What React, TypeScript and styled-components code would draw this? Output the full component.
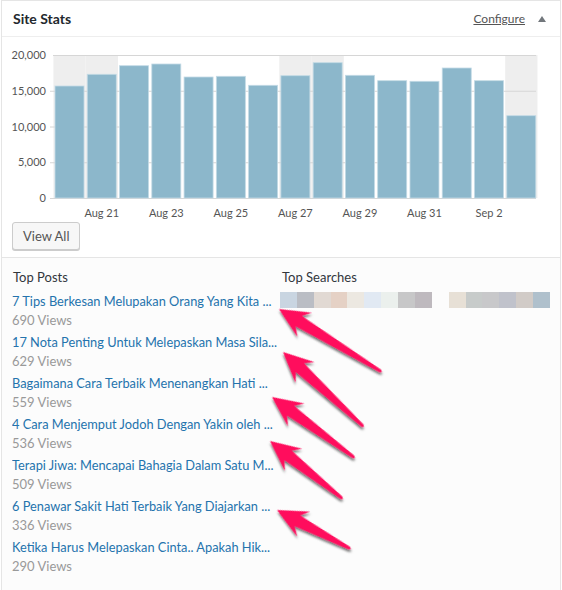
import React from "react";
import styled, { createGlobalStyle } from "styled-components";

const GlobalStyle = createGlobalStyle`
  html, body { margin: 0; padding: 0; background: #ffffff; }
  body { font-family: Lato, "Noto Sans", Arial, sans-serif; }
  * { box-sizing: border-box; }
`;

const Panel = styled.section`
  position: relative;
  width: 560px;
  margin-left: 1px;
  border: 1px solid #e5e5e5;
  border-bottom: none;
  background: #fff;
`;

const Header = styled.header`
  height: 36px;
  display: flex;
  align-items: center;
  padding: 0 12px 0 11px;
  border-bottom: 1px solid #eeeeee;
`;

const Title = styled.h2`
  flex: 1;
  margin: 0;
  font-size: 14px;
  font-weight: 700;
  color: #23282d;
`;

const ConfigureLink = styled.a`
  font-size: 12px;
  color: #555;
  text-decoration: underline;
  margin-right: 13px;
`;

const Toggle = styled.span`
  width: 0;
  height: 0;
  border-left: 4px solid transparent;
  border-right: 4px solid transparent;
  border-bottom: 6px solid #72777c;
  margin-right: 2px;
`;

const ChartWrap = styled.div`
  height: 185px;
  svg { display: block; }
`;

const ButtonRow = styled.div`
  padding: 0 0 7px 10px;
`;

const Button = styled.button`
  height: 28px;
  padding: 0 10px;
  border: 1px solid #cccccc;
  border-radius: 3px;
  background: #f7f7f7;
  box-shadow: 0 1px 0 #cccccc;
  font-family: Lato, "Noto Sans", Arial, sans-serif;
  font-size: 13px;
  color: #555;
`;

const Lists = styled.div`
  display: grid;
  grid-template-columns: 268px 1fr;
  padding: 10px 10px 20px 10px;
  border-top: 1px solid #e5e5e5;
  background: #fcfcfc;
`;

const Column = styled.div`
  min-width: 0;
`;

const Heading = styled.h3<{ $indent?: number }>`
  margin: 0 0 5px ${(p) => p.$indent ?? 0}px;
  font-size: 13px;
  font-weight: 400;
  line-height: 19px;
  color: #32373c;
`;

const PostItem = styled.div`
  height: 41px;
`;

const PostLink = styled.a`
  display: block;
  width: 270px;
  font-size: 12.8px;
  line-height: 19px;
  color: #2473ad;
  text-decoration: none;
  white-space: nowrap;
  overflow: hidden;
  text-overflow: ellipsis;
`;

const Views = styled.div`
  font-size: 13px;
  line-height: 19px;
  color: #999;
`;

const Swatches = styled.div`
  display: flex;
  margin-top: 1px;
`;

const Swatch = styled.span<{ $c: string; $gap?: boolean }>`
  width: 17px;
  height: 16px;
  background: ${(p) => p.$c};
  margin-left: ${(p) => (p.$gap ? 17 : 0)}px;
`;

const Overlay = styled.svg`
  position: absolute;
  left: 0;
  top: 0;
  pointer-events: none;
`;

const views = [
  15664, 17300, 18503, 18741, 16923, 17021, 15762, 17105, 18923, 17161, 16406,
  16322, 18182, 16406, 11510,
];
const shaded = new Set([0, 1, 7, 8, 14]);
const xLabels: Record<number, string> = {
  1: "Aug 21",
  3: "Aug 23",
  5: "Aug 25",
  7: "Aug 27",
  9: "Aug 29",
  11: "Aug 31",
  13: "Sep 2",
};

const posts = [
  ["7 Tips Berkesan Melupakan Orang Yang Kita ...", 690],
  ["17 Nota Penting Untuk Melepaskan Masa Sila...", 629],
  ["Bagaimana Cara Terbaik Menenangkan Hati ...", 559],
  ["4 Cara Menjemput Jodoh Dengan Yakin oleh ...", 536],
  ["Terapi Jiwa: Mencapai Bahagia Dalam Satu M...", 509],
  ["6 Penawar Sakit Hati Terbaik Yang Diajarkan ...", 336],
  ["Ketika Harus Melepaskan Cinta.. Apakah Hik...", 290],
] as const;

const searchColours = [
  "#c9d5e1", "#babdc4", "#e1d9d3", "#e5d1c5", "#ece8e1", "#e1e9f3", "#ebf0ed",
  "#c7c7c8", "#beb9be",
];
const searchColours2 = ["#e7e0d6", "#c7cbca", "#c8c8ca", "#c0c2cb", "#d1cbc7", "#afc0cc"];

// chart geometry (svg space)
const X0 = 53;
const STEP = 32.27;
const BAR_W = 29;
const Y_TOP = 18;
const Y_BOT = 161;
const MAX = 20000;
const yFor = (v: number) => Y_BOT - (v / MAX) * (Y_BOT - Y_TOP);

function Chart() {
  const ticks = [0, 5000, 10000, 15000, 20000];
  return (
    <svg width={558} height={185} viewBox="0 0 558 185">
      {Array.from(shaded).map((i) => (
        <rect
          key={`s${i}`}
          x={X0 + i * STEP - 1.6}
          y={Y_TOP}
          width={STEP}
          height={Y_BOT - Y_TOP}
          fill="#eeeeee"
        />
      ))}
      {ticks.map((t) => (
        <g key={t}>
          <line
            x1={t === 20000 ? 51 : 48}
            x2={534}
            y1={yFor(t) + 0.5}
            y2={yFor(t) + 0.5}
            stroke="#d6d6d6"
          />
          <text
            x={44}
            y={yFor(t) + 4}
            textAnchor="end"
            fontSize={11}
            fill="#555"
            fontFamily="Lato, 'Noto Sans', sans-serif"
          >
            {t.toLocaleString("en-US")}
          </text>
        </g>
      ))}
      {views.map((v, i) => (
        <rect
          key={i}
          x={X0 + i * STEP}
          y={yFor(v)}
          width={BAR_W}
          height={Y_BOT - yFor(v)}
          fill="#8cb7cb"
          stroke="#c3dae5"
          strokeWidth={0.8}
        />
      ))}
      {Object.entries(xLabels).map(([i, label]) => (
        <text
          key={label}
          x={X0 + Number(i) * STEP + BAR_W / 2}
          y={180}
          textAnchor="middle"
          fontSize={11}
          fill="#555"
          fontFamily="Lato, 'Noto Sans', sans-serif"
        >
          {label}
        </text>
      ))}
    </svg>
  );
}

// callout arrows: tip point and tail point in page coordinates
const arrows: [number, number, number, number][] = [
  [279, 309, 382, 372],
  [283, 352, 364, 427],
  [272, 397, 355, 458],
  [270, 441, 343, 499],
  [277, 510, 351, 549],
];

function Arrow({ tx, ty, ex, ey }: { tx: number; ty: number; ex: number; ey: number }) {
  const dx = ex - tx;
  const dy = ey - ty;
  const len = Math.hypot(dx, dy);
  const ang = (Math.atan2(dy, dx) * 180) / Math.PI;
  const pts = [
    [0, 0],
    [30, -14],
    [23, -6],
    [len - 2, -1.6],
    [len, 0],
    [len - 2, 1.6],
    [23, 6],
    [30, 14],
  ]
    .map((p) => p.join(","))
    .join(" ");
  return (
    <polygon
      points={pts}
      fill="#ff0f5d"
      transform={`translate(${tx} ${ty}) rotate(${ang})`}
      filter="url(#arrowShadow)"
    />
  );
}

export default function App() {
  return (
    <>
      <GlobalStyle />
      <Panel>
        <Header>
          <Title>Site Stats</Title>
          <ConfigureLink href="#">Configure</ConfigureLink>
          <Toggle />
        </Header>
        <ChartWrap>
          <Chart />
        </ChartWrap>
        <ButtonRow>
          <Button>View All</Button>
        </ButtonRow>
        <Lists>
          <Column>
            <Heading $indent={1}>Top Posts</Heading>
            {posts.map(([title, n]) => (
              <PostItem key={title}>
                <PostLink href="#">{title}</PostLink>
                <Views>{n} Views</Views>
              </PostItem>
            ))}
          </Column>
          <Column>
            <Heading $indent={2}>Top Searches</Heading>
            <Swatches>
              {searchColours.map((c, i) => (
                <Swatch key={`a${i}`} $c={c} />
              ))}
              {searchColours2.map((c, i) => (
                <Swatch key={`b${i}`} $c={c} $gap={i === 0} />
              ))}
            </Swatches>
          </Column>
        </Lists>
        <Overlay width={558} height={600} viewBox="0 0 558 600">
          <defs>
            <filter id="arrowShadow" x="-20%" y="-20%" width="140%" height="140%">
              <feDropShadow dx={1.5} dy={2} stdDeviation={1.2} floodColor="#000" floodOpacity={0.55} />
            </filter>
          </defs>
          <g transform="translate(-2 -1)">
            {arrows.map(([tx, ty, ex, ey], i) => (
              <Arrow key={i} tx={tx} ty={ty} ex={ex} ey={ey} />
            ))}
          </g>
        </Overlay>
      </Panel>
    </>
  );
}
